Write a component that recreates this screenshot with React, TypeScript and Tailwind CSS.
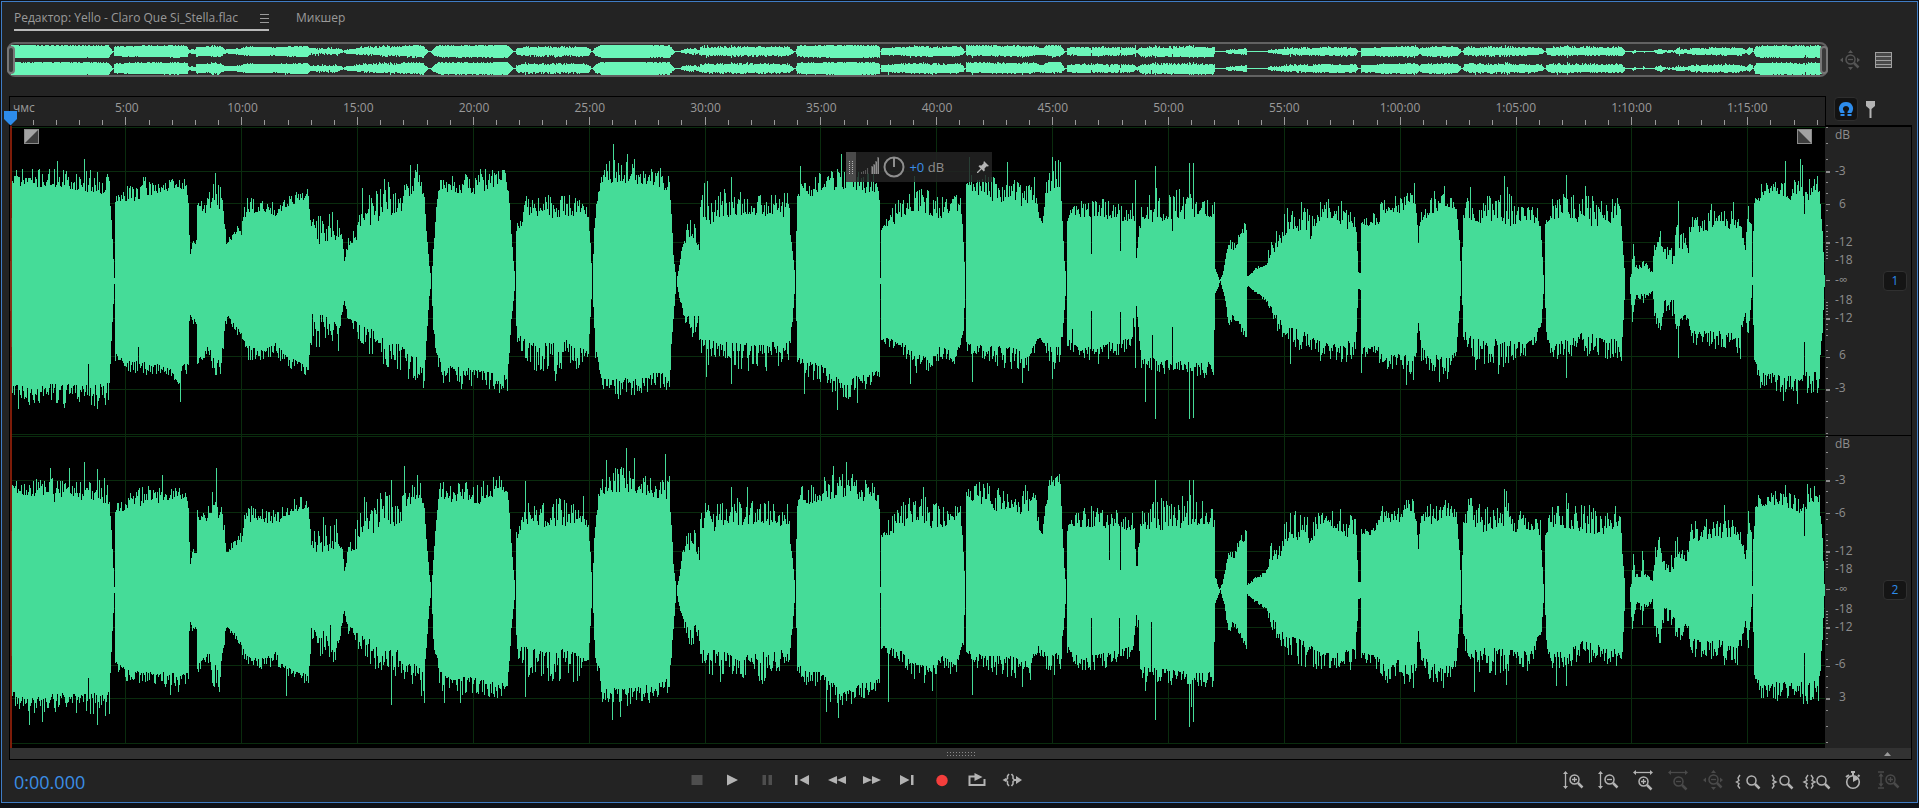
import { useState } from "react";
import type { ReactNode } from "react";

const WIDTH = 1815;
const MINUTE = 23.17;

// x, quiet level, peak level (pixels away from the centre line)
type Point = [number, number, number];

const upper: Point[] = [
  [10, 20, 20], [12, 95, 112], [55, 93, 113], [80, 90, 110], [109, 86, 114], [111, 60, 62], [114, 3, 3], [115, 78, 85],
  [125, 78, 95], [140, 82, 105], [160, 88, 103], [185, 92, 102], [188, 78, 85], [189, 40, 50], [190, 26, 28], [192, 38, 42], [196, 36, 42],
  [197, 68, 84], [205, 68, 80], [212, 75, 100], [218, 72, 108], [222, 68, 90], [226, 36, 42], [232, 42, 50], [241, 46, 60], [243, 60, 72],
  [247, 68, 85], [258, 68, 82], [275, 65, 80], [285, 73, 86], [300, 80, 94], [308, 82, 92], [310, 60, 62], [311, 38, 65],
  [320, 36, 72], [330, 38, 76], [338, 42, 70], [342, 40, 45], [344, 18, 20], [348, 35, 45], [358, 42, 75], [362, 52, 95],
  [375, 56, 92], [385, 68, 104], [397, 62, 85], [405, 75, 100], [412, 88, 118], [420, 92, 112], [424, 82, 86], [426, 50, 52],
  [429, 15, 16], [431, 0, 0], [433, 30, 32], [436, 70, 75], [440, 92, 112], [450, 88, 106], [465, 88, 108], [480, 86, 112],
  [490, 92, 114], [504, 98, 114], [508, 88, 95], [510, 60, 62], [513, 20, 20], [515, 0, 0], [516, 50, 60], [522, 55, 75], [527, 66, 88],
  [535, 64, 84], [550, 62, 90], [560, 64, 92], [575, 65, 88], [583, 68, 95], [588, 60, 66], [590, 35, 38], [592, 0, 0],
  [594, 50, 60], [596, 75, 80], [600, 95, 112], [608, 96, 120], [620, 98, 125], [630, 98, 122], [642, 95, 116], [655, 92, 112],
  [669, 90, 115], [671, 65, 70], [673, 25, 26], [676, 0, 0], [679, 14, 16], [682, 34, 38], [687, 40, 60], [693, 40, 62], [698, 35, 58],
  [699, 30, 32], [700, 58, 75], [704, 62, 98], [711, 55, 80], [720, 64, 92], [740, 65, 94], [760, 66, 92], [780, 63, 85],
  [789, 65, 95], [790, 45, 48], [792, 30, 32], [795, 0, 0], [796, 50, 52], [797, 80, 90], [800, 88, 106], [815, 84, 106],
  [825, 90, 115], [840, 92, 116], [855, 90, 118], [865, 88, 115], [878, 88, 106], [879, 80, 82], [880, 3, 3], [881, 50, 56],
  [890, 54, 75], [900, 62, 85], [915, 70, 104], [930, 62, 90], [945, 63, 84], [960, 72, 88], [962, 55, 58], [965, 0, 0],
  [966, 90, 100], [975, 88, 112], [985, 82, 108], [1000, 78, 104], [1010, 82, 105], [1020, 74, 98], [1035, 78, 106],
  [1038, 60, 75], [1042, 56, 60], [1046, 85, 100], [1052, 92, 122], [1060, 94, 120], [1062, 60, 62], [1064, 20, 22], [1066, 0, 0],
  [1067, 58, 60], [1070, 64, 75], [1085, 62, 82], [1100, 62, 84], [1115, 62, 80], [1132, 58, 80], [1134, 60, 62], [1136, 22, 24], [1139, 45, 60], [1142, 62, 82],
  [1155, 58, 95], [1170, 62, 88], [1190, 62, 98], [1200, 66, 90], [1214, 62, 82], [1215, 12, 14], [1219, 0, 2], [1222, 5, 8],
  [1225, 20, 22], [1228, 36, 44], [1233, 28, 38], [1240, 42, 55], [1246, 50, 62], [1247, 4, 6], [1255, 10, 13], [1266, 16, 20],
  [1270, 25, 48], [1280, 34, 54], [1288, 50, 82], [1300, 50, 80], [1310, 42, 76], [1316, 58, 82], [1330, 64, 84], [1345, 52, 80],
  [1355, 54, 84], [1357, 30, 32], [1358, 8, 9], [1360, 8, 9], [1361, 55, 62], [1378, 55, 72], [1382, 68, 86], [1400, 68, 86],
  [1412, 80, 98], [1416, 68, 70], [1418, 38, 42], [1421, 60, 86], [1435, 68, 92], [1447, 74, 92], [1456, 72, 78], [1459, 40, 42], [1461, 0, 0],
  [1463, 60, 70], [1468, 62, 95], [1480, 58, 90], [1495, 60, 86], [1510, 54, 92], [1520, 60, 82], [1530, 60, 76], [1540, 54, 76],
  [1541, 40, 42], [1543, 6, 6], [1544, 0, 0], [1545, 55, 60], [1550, 62, 84], [1565, 60, 88], [1580, 58, 92], [1595, 54, 84], [1605, 56, 80],
  [1618, 62, 90], [1620, 72, 88], [1622, 35, 40], [1625, 0, 0], [1629, 0, 0], [1631, 6, 8], [1633, 34, 38], [1635, 12, 15], [1643, 12, 22],
  [1652, 8, 9], [1654, 25, 44], [1659, 40, 56], [1664, 20, 35], [1673, 17, 35], [1676, 32, 66], [1682, 32, 50], [1688, 26, 42],
  [1690, 48, 70], [1705, 50, 72], [1720, 52, 70], [1738, 52, 72], [1745, 30, 36], [1748, 55, 75], [1751, 55, 60], [1752, 4, 4],
  [1753, 48, 60], [1755, 78, 96], [1765, 84, 98], [1780, 86, 100], [1800, 76, 102], [1806, 76, 104], [1815, 90, 110], [1819, 84, 106], [1822, 50, 52], [1824, 6, 6],
];

const lower: Point[] = [
  [10, 30, 30], [12, 100, 118], [30, 108, 126], [50, 102, 122], [80, 104, 124], [109, 102, 126], [111, 60, 62], [114, 3, 3], [115, 70, 80],
  [125, 78, 92], [150, 82, 94], [165, 82, 98], [180, 84, 104], [188, 82, 90], [189, 40, 44], [190, 30, 34], [192, 38, 45], [196, 34, 44],
  [197, 74, 86], [208, 62, 78], [213, 74, 100], [220, 78, 105], [225, 40, 50], [227, 34, 38], [240, 50, 60], [246, 64, 80],
  [260, 68, 80], [275, 62, 76], [285, 73, 85], [300, 82, 92], [308, 84, 95], [310, 62, 64], [311, 32, 65], [330, 34, 72],
  [338, 48, 72], [342, 28, 35], [344, 20, 22], [348, 35, 45], [360, 44, 62], [372, 48, 78], [385, 58, 86], [398, 60, 92],
  [412, 72, 102], [424, 82, 108], [426, 55, 60], [429, 15, 16], [431, 0, 0], [433, 48, 52], [437, 68, 88], [442, 84, 106],
  [460, 86, 108], [480, 88, 106], [495, 92, 110], [507, 94, 110], [509, 70, 72], [511, 38, 40], [515, 0, 0], [516, 42, 46],
  [518, 54, 76], [530, 58, 92], [548, 62, 95], [565, 58, 92], [580, 66, 92], [588, 70, 74], [590, 35, 36], [592, 0, 0], [595, 68, 78],
  [599, 78, 90], [602, 98, 112], [620, 98, 118], [640, 95, 115], [655, 92, 112], [669, 88, 108], [672, 50, 52], [676, 0, 0],
  [679, 16, 18], [684, 30, 38], [690, 38, 60], [698, 32, 48], [700, 58, 82], [715, 60, 86], [740, 62, 88], [760, 62, 92],
  [789, 58, 86], [792, 38, 42], [795, 0, 0], [797, 72, 85], [805, 80, 96], [820, 82, 102], [832, 92, 115], [843, 102, 120],
  [855, 95, 116], [868, 92, 106], [879, 88, 100], [880, 3, 3], [881, 55, 60], [900, 60, 74], [915, 72, 92], [932, 76, 98],
  [940, 64, 76], [955, 74, 90], [963, 50, 55], [965, 0, 0], [966, 60, 72], [985, 66, 82], [1005, 64, 88], [1030, 70, 90],
  [1038, 55, 62], [1050, 64, 90], [1060, 63, 86], [1064, 28, 30], [1066, 0, 0], [1067, 56, 68], [1080, 68, 80], [1095, 64, 86],
  [1115, 60, 78], [1133, 55, 68], [1136, 25, 26], [1141, 76, 92], [1160, 78, 96], [1180, 80, 96], [1200, 82, 98], [1213, 80, 100],
  [1215, 12, 14], [1220, 0, 0], [1225, 18, 22], [1228, 40, 48], [1233, 30, 38], [1246, 54, 60], [1247, 4, 6], [1266, 18, 21],
  [1272, 28, 45], [1285, 46, 62], [1300, 48, 78], [1315, 58, 80], [1330, 64, 82], [1355, 58, 80], [1358, 8, 9], [1360, 8, 9],
  [1361, 62, 76], [1378, 66, 80], [1385, 76, 98], [1398, 70, 82], [1408, 76, 102], [1415, 74, 102], [1418, 40, 44], [1421, 66, 82],
  [1435, 74, 95], [1447, 76, 100], [1456, 70, 76], [1461, 0, 0], [1463, 44, 60], [1475, 58, 82], [1495, 58, 86], [1515, 60, 86],
  [1530, 60, 80], [1541, 40, 44], [1544, 0, 0], [1546, 50, 54], [1550, 66, 78], [1565, 58, 80], [1585, 50, 74], [1600, 56, 78],
  [1615, 58, 80], [1621, 68, 85], [1625, 0, 0], [1629, 0, 0], [1632, 36, 42], [1636, 12, 15], [1643, 14, 24], [1652, 9, 11],
  [1655, 32, 48], [1660, 42, 58], [1664, 18, 28], [1673, 18, 38], [1676, 38, 60], [1688, 32, 45], [1690, 48, 66], [1705, 50, 70],
  [1720, 50, 70], [1738, 53, 76], [1745, 30, 32], [1748, 52, 62], [1752, 4, 4], [1754, 78, 88], [1760, 92, 108], [1780, 92, 112],
  [1800, 92, 114], [1818, 90, 114], [1822, 50, 52], [1824, 6, 6],
];

type Marks = Record<number, number>;

const spikes: { up: Marks; down: Marks }[] = [
  {
    up: { 57: 120, 84: 122, 60: 95, 215: 108, 410: 116, 417: 117, 613: 137, 627: 127, 634: 122, 707: 100, 731: 104, 800: 115, 841: 127, 914: 105, 969: 124, 1007: 119, 1052: 124, 1058: 121, 1091: 27, 1120: 30, 1135: 101, 1155: 115, 1172: 50, 1189: 118, 1193: 118, 1414: 98, 1444: 95, 1504: 105, 1507: 94, 1566: 106, 1585: 95, 1678: 80, 1711: 77, 1733: 79, 1785: 120, 1800: 122, 1802: 116, 1804: 67 },
    down: { 18: 128, 29: 124, 64: 127, 88: 83, 97: 128, 105: 124, 138: 66, 180: 121, 461: 108, 499: 112, 555: 100, 618: 118, 706: 96, 731: 103, 804: 113, 837: 129, 857: 122, 910: 103, 972: 101, 1022: 102, 1052: 98, 1072: 48, 1091: 30, 1120: 31, 1133: 37, 1135: 87, 1145: 121, 1152: 54, 1155: 138, 1172: 46, 1189: 138, 1193: 137, 1290: 83, 1361: 92, 1406: 104, 1439: 101, 1475: 89, 1498: 93, 1566: 97, 1678: 77, 1740: 78, 1783: 120, 1797: 123, 1804: 61 },
  },
  {
    up: { 54: 88, 50: 122, 69: 122, 84: 128, 97: 121, 162: 115, 216: 122, 391: 110, 404: 124, 417: 115, 525: 109, 606: 130, 626: 142, 634: 132, 665: 136, 731: 103, 747: 103, 833: 124, 846: 128, 923: 103, 978: 94, 1025: 105, 1057: 114, 1084: 82, 1091: 84, 1109: 30, 1120: 20, 1137: 24, 1155: 110, 1189: 110, 1193: 110, 1382: 84, 1445: 90, 1504: 101, 1506: 99, 1566: 97, 1584: 84, 1642: 39, 1643: 30, 1724: 85, 1748: 79, 1785: 105, 1804: 54, 1807: 106 },
    down: { 29: 135, 42: 132, 88: 88, 97: 135, 105: 126, 170: 105, 286: 106, 391: 115, 424: 113, 444: 113, 460: 113, 525: 107, 612: 130, 620: 127, 720: 92, 762: 94, 826: 122, 838: 128, 888: 112, 932: 101, 972: 105, 1022: 97, 1091: 28, 1119: 28, 1138: 30, 1145: 101, 1151: 32, 1155: 130, 1189: 137, 1191: 117, 1193: 132, 1382: 86, 1474: 102, 1506: 95, 1556: 96, 1566: 96, 1642: 35, 1724: 75, 1804: 63, 1807: 114 },
  },
];

function randomizer(seed: number) {
  let s = seed;
  return () => {
    s = (s * 1664525 + 1013904223) % 4294967296;
    return s / 4294967296;
  };
}

function levels(points: Point[], marks: Marks, seed: number) {
  const random = randomizer(seed);
  const result: number[] = [];
  let i = 0;
  for (let x = 10; x < 10 + WIDTH; x++) {
    while (i < points.length - 2 && points[i + 1][0] <= x) i++;
    const a = points[i];
    const b = points[i + 1];
    const t = Math.min(1, (x - a[0]) / (b[0] - a[0]));
    const quiet = a[1] + (b[1] - a[1]) * t;
    const peak = a[2] + (b[2] - a[2]) * t;
    const level = quiet + (peak - quiet) * Math.pow(random(), 1.4);
    result.push(Math.round(marks[x] ?? level));
  }
  return result;
}

const channels = spikes.map((s, n) => ({
  up: levels(upper, s.up, 71 + n * 900),
  down: levels(lower, s.down, 1234 + n * 77),
}));

function wavePath(n: number) {
  const { up, down } = channels[n];
  return up.map((u, x) => `M${x} ${155 - u}h1V${156 + down[x]}h-1z`).join("");
}

const paths = [wavePath(0), wavePath(1)];

function overviewPath(n: number, centre: number) {
  const { up, down } = channels[n];
  return up
    .map((u, x) => {
      const a = Math.min(6, Math.max(0, u * 0.068 - 1));
      const b = Math.min(6, Math.max(0, down[x] * 0.068 - 1));
      return `M${x} ${(centre - a).toFixed(1)}h1V${(centre + 1 + b).toFixed(1)}h-1z`;
    })
    .join("");
}

const overview = overviewPath(0, 7) + overviewPath(1, 24);

const times = ["5:00", "10:00", "15:00", "20:00", "25:00", "30:00", "35:00", "40:00", "45:00", "50:00", "55:00", "1:00:00", "1:05:00", "1:10:00", "1:15:00"];

const gaps = ["grow-0", "grow-[20]", "grow-[17]", "grow-[22]", "grow-[2]", "grow-[4]", "grow-[4]", "grow-[2]", "grow-[22]", "grow-[17]"];
const scales = [
  ["dB", "-3", "6", "-12", "-18", "-∞", "-18", "-12", "6", "-3"],
  ["dB", "-3", "-6", "-12", "-18", "-∞", "-18", "-12", "-6", "3"],
];

const majorTicks = [110, 77, 38, 0];
const minorTicks = [154, 138, 122, 99, 88, 70, 55, 49, 44, 34, 31, 28, 25, 22];

function Channel({ n }: { n: number }) {
  return (
    <div className="flex min-h-0 flex-1">
      <svg className="h-full min-w-0 flex-1 bg-black" viewBox={`0 0 ${WIDTH} 310`} preserveAspectRatio="none" shapeRendering="crispEdges">
        <g fill="#0a2c0e">
          {times.map((t, i) => (
            <rect key={t} x={Math.floor((i + 1) * 5 * MINUTE)} y="0" width="1" height="310" />
          ))}
          {[1, 45, 77, 116, 135, 174, 193, 231, 264, 309].map((y) => (
            <rect key={y} x="0" y={y} width={WIDTH} height="1" />
          ))}
        </g>
        <path d={paths[n]} fill="#45dc98" />
        <rect x="0" y="155" width={WIDTH} height="1" fill="#8fe3b6" opacity="0.35" />
      </svg>
      <div className="flex w-[86px] border-t border-black bg-[#232323]">
        <svg className="h-full w-[6px]" viewBox="0 0 6 310" preserveAspectRatio="none" shapeRendering="crispEdges" fill="#8d8d8d">
          {majorTicks.flatMap((d) => [155 - d, 155 + d]).map((y, i) => (
            <rect key={i} x="1" y={y - 1} width="4" height={y === 155 ? 1 : 2} />
          ))}
          {minorTicks.flatMap((d) => [155 - d, 155 + d]).map((y) => (
            <rect key={y} x="1" y={y - 1} width="2" height="1" />
          ))}
        </svg>
        <div className="flex flex-1 flex-col pl-1 text-xs leading-4 text-[#8e8e8e]">
          {scales[n].map((label, i) => (
            <div key={i} className="contents">
              <span className={gaps[i]} />
              <span className={label === "6" || label === "3" ? "h-4 pl-1" : "h-4"}>{label}</span>
            </div>
          ))}
          <span className="grow-[39]" />
        </div>
        <button className="mr-1 h-5 w-6 self-center rounded-sm border border-[#303030] bg-[#151515] text-xs leading-4 text-[#2d8ceb]">
          {n + 1}
        </button>
      </div>
    </div>
  );
}

function FadeHandle({ flip }: { flip?: boolean }) {
  return (
    <svg className="h-[15px] w-[15px]" viewBox="0 0 15 15">
      <rect width="15" height="15" fill="#a3a3a3" />
      <path d={flip ? "M1 1v13h13z" : "M14 1v13H1z"} fill="#3d3d3d" />
      <rect x="0.5" y="0.5" width="14" height="14" fill="none" stroke="#8a8a8a" />
    </svg>
  );
}

function GainPanel() {
  return (
    <div className="absolute top-[26px] left-[44%] flex h-[30px] w-[146px] items-center bg-[#232323]/85">
      <div className="flex h-full w-[10px] items-center justify-center bg-[#4a4a4a]">
        <svg width="4" height="13" shapeRendering="crispEdges">
          {[0, 2, 4, 6, 8, 10, 12].map((y) => (
            <path key={y} d={`M0 ${y}h1v1h-1zM3 ${y}h1v1h-1z`} fill="#b5b5b5" />
          ))}
        </svg>
      </div>
      <svg className="mb-1 ml-1" width="19" height="18" fill="#8e8e8e" shapeRendering="crispEdges">
        {[2, 3, 4, 6, 8, 10, 13, 17].map((h, i) => (
          <rect key={i} x={i > 3 ? i * 2 + 3 : i * 2 + 1} y={18 - h} width={i > 3 ? 2 : 1} height={h} stroke="#232323" strokeWidth="0.5" />
        ))}
      </svg>
      <svg className="ml-1" width="22" height="22" fill="none" stroke="#8e8e8e" strokeWidth="2">
        <circle cx="11" cy="11" r="9.5" />
        <path d="M11 1v10" />
      </svg>
      <span className="ml-1 text-[13px] leading-4 text-[#8e8e8e]">
        <span className="text-[#3a8ee6]">+0</span> dB
      </span>
      <button className="mr-[3px] ml-auto" aria-label="pin">
        <svg width="12" height="12" viewBox="0 0 12 12" fill="#b5b5b5">
          <path d="M7 0l5 5-1.500.5-.8-.2L7.500 7.500l.3 2-1 1L4.600 8.300 1 12H0v-1l3.700-3.600L1.500 5.200l1-1 2 .3L6.700 2.300 6.500 1.500z" />
        </svg>
      </button>
    </div>
  );
}

function Lens({ x = 0, y = 0, sign }: { x?: number; y?: number; sign?: "+" | "-" }) {
  return (
    <g transform={`translate(${x} ${y})`}>
      <circle cx="5.500" cy="5.500" r="4.500" fill="none" strokeWidth="1.500" />
      <path d="M9 9l4.500 4.500" strokeWidth="2.500" />
      {sign && <path d={sign === "+" ? "M3 5.500h5M5.500 3v5" : "M3 5.500h5"} strokeWidth="1.300" />}
    </g>
  );
}

const vertical = (
  <g>
    <path d="M2.500 3v14" strokeWidth="1.300" />
    <path d="M0 4l2.500-3L5 4zM0 16l2.500 3L5 16z" className="fill-current" stroke="none" />
  </g>
);
const horizontal = (
  <g>
    <path d="M2 2.500h16" strokeWidth="1.300" />
    <path d="M3 0L0 2.500 3 5zM17 0l3 2.500L17 5z" className="fill-current" stroke="none" />
  </g>
);
const fourWay = (
  <g>
    <path d="M8 3l2.500-3L13 3zM8 17l2.500 3 2.500-3zM3 7.500L0 10l3 2.500zM17 7.500l3 2.500-3 2.500z" className="fill-current" stroke="none" />
    <Lens x={5} y={4} sign="-" />
  </g>
);

const zoomTools: [string, ReactNode, boolean?][] = [
  ["zoom in amplitude", <>{vertical}<Lens x={6} y={4} sign="+" /></>],
  ["zoom out amplitude", <>{vertical}<Lens x={6} y={4} sign="-" /></>],
  ["zoom in time", <>{horizontal}<Lens x={5} y={6} sign="+" /></>],
  ["zoom out time", <>{horizontal}<Lens x={5} y={6} sign="-" /></>, true],
  ["zoom out full", fourWay, true],
  ["zoom in at in point", <><path d="M2 5L0 8l1 2.500L-1.500 12l2.500 1.500L0 16l2 2.500" fill="none" strokeWidth="1.400" /><Lens x={8} y={5} /></>],
  ["zoom in at out point", <><path d="M-1 5l2 3-1 2.500 3 1.500-3 1.500 1 2.500-2 2.500" fill="none" strokeWidth="1.400" /><Lens x={6} y={5} /></>],
  ["zoom to selection", <><path d="M0 5l-2 3 1 2.500-3 1.500 3 1.500-1 2.500 2 2.500M3 5l2 3-1 2.500L7 12l-3 1.500 1 2.500-2 2.500" fill="none" strokeWidth="1.400" /><Lens x={8} y={5} /></>],
  ["zoom timed", <><circle cx="10" cy="12" r="6.300" fill="none" strokeWidth="1.600" /><path d="M10 6v6l5.500-3A6.300 6.300 0 0 0 10 6z" className="fill-current" stroke="none" /><path d="M8 2h4M10 2v4M15 5l1.500 1.500M3 7l3-2" strokeWidth="2" /></>],
  ["zoom selected track", <><path d="M0 2h6M0 18h6M3 5v10" strokeWidth="1.500" /><path d="M.5 6.500L3 3l2.500 3.500zM.5 13.500L3 17l2.500-3.500z" className="fill-current" stroke="none" /><Lens x={7} y={4} sign="+" /></>, true],
];

const transport: [string, ReactNode][] = [
  ["stop", <rect x="4.500" y="5" width="11" height="10" fill="#4e4e4e" />],
  ["play", <path d="M5 4.500l11 5.500-11 5.500z" />],
  ["pause", <path d="M5.500 5h3.500v10H5.500zM11.500 5H15v10h-3.500z" fill="#4e4e4e" />],
  ["previous", <path d="M3 5h2.500v10H3zM17 5v10L7.500 10z" />],
  ["rewind", <path d="M10 6v8l-9-4zM19 6v8l-9-4z" />],
  ["forward", <path d="M1 6v8l9-4zM10 6v8l9-4z" />],
  ["next", <path d="M3 5v10l9.500-5zM14 5h2.500v10H14z" />],
  ["record", <circle cx="10" cy="10.500" r="5.700" fill="#f43e3c" />],
  ["loop", <path d="M1.500 5.500h6V3l8 4-8 4V7.500h-4v6.500h13V9h2v7h-17z" />],
  ["skip selection", <><path d="M7 4L5.500 6v2.500L3.500 10l2 1.500V14L7 16M9.500 4L11 6v2.500l1.500 1.500-1.500 1.500V14L9.500 16" fill="none" stroke="#b3b3b3" strokeWidth="1.500" /><path d="M.5 10L4 8v4zM12 9h2V6l6 4-6 4v-3h-2z" /></>],
];

export default function App() {
  const [active, setActive] = useState("");

  return (
    <main className="flex h-screen flex-col bg-[#0e1117] px-px pt-px pb-[5px] font-['Open_Sans',sans-serif] text-[#9a9a9a]">
      <section className="flex min-h-0 flex-1 flex-col border border-[#3f7cc4] bg-[#232323]">
        <nav className="flex h-10 items-start gap-[27px] pt-[6px] pl-3 text-xs leading-5">
          <button className="flex w-[255px] items-center justify-between border-b-2 border-[#b9b9b9] pb-px">
            Редактор: Yello - Claro Que Si_Stella.flac
            <svg width="9" height="9" fill="#9a9a9a" shapeRendering="crispEdges">
              <path d="M0 0h9v1H0zM0 4h9v1H0zM0 8h9v1H0z" />
            </svg>
          </button>
          <button>Микшер</button>
        </nav>

        <div className="mb-[19px] flex h-[35px] items-center pl-[5px]">
          <div className="relative flex h-full min-w-0 flex-1 items-center rounded-lg border-2 border-[#626262] bg-[#2d2d2d]">
            <svg className="h-[31px] min-w-0 flex-1" viewBox={`0 0 ${WIDTH} 31`} preserveAspectRatio="none" shapeRendering="crispEdges">
              <path d={overview} fill="#6bf6b9" />
            </svg>
            <div className="absolute top-[2px] -left-[2px] h-7 w-2 rounded-sm border-2 border-[#777] bg-[#3a3a3a]" />
            <div className="absolute top-[2px] -right-[2px] h-7 w-2 rounded-sm border-2 border-[#777] bg-[#3a3a3a]" />
          </div>
          <div className="flex w-[89px] items-center gap-[15px] pl-3">
            <button aria-label="zoom out full view" className="text-[#555]">
              <svg width="20" height="20" stroke="currentColor">{fourWay}</svg>
            </button>
            <button aria-label="track list">
              <svg width="17" height="16" fill="#4a4a4a" stroke="#a0a0a0" shapeRendering="crispEdges">
                <path d="M.5.5h16v15H.5zM1 4.500h15M1 8.500h15M1 12.500h15" />
              </svg>
            </button>
          </div>
        </div>

        <div className="flex h-[30px] pr-[5px] pl-[7px]">
          <div className="relative flex min-w-0 flex-1 flex-col border-t border-r border-l border-black text-xs leading-4">
            <div className="flex h-5 pt-[3px]">
              <span className="w-0 grow-[2.5] pl-[3px]">чмс</span>
              {times.map((t) => (
                <span key={t} className="w-0 grow-[5] pr-[2px] text-center">{t}</span>
              ))}
              <span className="w-0 grow-[0.83]" />
            </div>
            <svg className="h-2 w-full" viewBox={`0 0 ${WIDTH} 8`} preserveAspectRatio="none" fill="#9a9a9a" shapeRendering="crispEdges">
              {Array.from({ length: 78 }, (_, i) => i + 1).map((m) => (
                <rect key={m} x={Math.floor(m * MINUTE)} y={m % 5 ? 3 : 0} width="1" height="8" />
              ))}
            </svg>
            <svg className="absolute top-[14px] -left-[6px] z-10" width="13" height="15">
              <path d="M0 0h13v8l-6 6h-1l-6-6z" fill="#2d8ceb" />
            </svg>
          </div>
          <div className="flex w-[86px] items-start gap-2 border-b border-black pt-px pl-2">
            <button aria-label="snap" className="flex h-6 w-6 items-center justify-center rounded-sm border border-[#2e2e2e] bg-[#121212]">
              <svg width="16" height="16" viewBox="0 0 16 16">
                <path d="M4.500 15V11.500C1.500 8 3 3 8 3s6.500 5 3.500 8.500V15" fill="none" stroke="#2d8ceb" strokeWidth="4" />
                <path d="M1 12.500h6M9 12.500h6" stroke="#121212" strokeWidth="1" />
              </svg>
            </button>
            <button aria-label="add marker" className="mt-1">
              <svg width="9" height="17" fill="#b3b3b3">
                <path d="M0 0h9v5L5.500 8v9h-2V8L0 5z" />
              </svg>
            </button>
          </div>
        </div>

        <div className="flex min-h-0 flex-1 flex-col pr-[5px] pl-[7px]">
          <div className="relative flex min-h-0 flex-1 flex-col border-r border-l border-black">
            <Channel n={0} />
            <Channel n={1} />
            <div className="flex h-1 bg-black">
              <span className="ml-auto w-[86px] bg-[#232323]" />
            </div>
            <div className="absolute top-0 bottom-0 left-0 w-[2px] bg-[#8c1f0a]/90" />
            <div className="absolute top-[3px] left-[14px]"><FadeHandle /></div>
            <div className="absolute top-[3px] right-[99px]"><FadeHandle flip /></div>
            <GainPanel />
          </div>
          <div className="flex h-3 items-center border-r border-b border-l border-black bg-[#323232]">
            <span className="flex-1 pl-5" />
            <svg width="28" height="4" fill="#8a8a8a" shapeRendering="crispEdges">
              {Array.from({ length: 10 }, (_, i) => (
                <path key={i} d={`M${i * 3} 0h1v1h-1zM${i * 3} 3h1v1h-1z`} />
              ))}
            </svg>
            <span className="flex-1 pr-5">
              <svg className="ml-auto" width="7" height="4" fill="#9a9a9a">
                <path d="M0 4L3.500 0 7 4z" />
              </svg>
            </span>
          </div>
        </div>

        <footer className="flex h-[42px] items-center pr-3 pb-[2px] pl-3">
          <div className="w-[35.2%] pt-1 text-lg leading-6 text-[#3b8ee6]">0:00.000</div>
          <div className="flex">
            {transport.map(([name, icon]) => (
              <button key={name} aria-label={name} aria-pressed={active === name} onClick={() => setActive(name)} className="flex w-[35px] justify-center">
                <svg width="20" height="20" fill="#b3b3b3">{icon}</svg>
              </button>
            ))}
          </div>
          <div className="ml-auto flex">
            {zoomTools.map(([name, icon, off]) => (
              <button key={name} aria-label={name} disabled={off} className={off ? "flex w-[35px] justify-center text-[#4a4a4a]" : "flex w-[35px] justify-center text-[#b3b3b3]"}>
                <svg className="overflow-visible" width="20" height="20" stroke="currentColor">{icon}</svg>
              </button>
            ))}
          </div>
        </footer>
      </section>
    </main>
  );
}
